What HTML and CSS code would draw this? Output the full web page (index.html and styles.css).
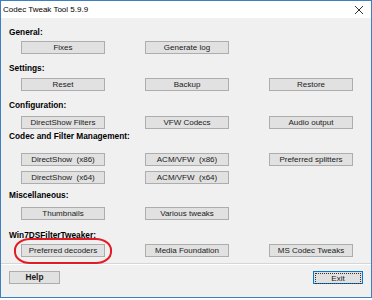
FILE: index.html
```html
<!DOCTYPE html>
<html lang="en">

<head>
    <meta charset="UTF-8">
    <meta name="viewport" content="width=device-width, initial-scale=1.0">
    <title>Codec Tweak Tool</title>
    <link rel="stylesheet" href="styles.css">
</head>

<body>
    <div class="window">
        <div class="titlebar">
            <span class="title">Codec Tweak Tool 5.9.9</span>
            <svg class="close" width="10" height="10" viewBox="0 0 10 10">
                <path d="M1 1 L9 9 M9 1 L1 9" stroke="#333" stroke-width="1" fill="none" />
            </svg>
        </div>

        <div class="content">
            <div class="section general">
                <div class="label">General:</div>
                <div class="row">
                    <button class="btn">Fixes</button>
                    <button class="btn">Generate log</button>
                </div>
            </div>

            <div class="section settings">
                <div class="label">Settings:</div>
                <div class="row">
                    <button class="btn">Reset</button>
                    <button class="btn">Backup</button>
                    <button class="btn">Restore</button>
                </div>
            </div>

            <div class="section config">
                <div class="label">Configuration:</div>
                <div class="row">
                    <button class="btn">DirectShow Filters</button>
                    <button class="btn">VFW Codecs</button>
                    <button class="btn">Audio output</button>
                </div>
            </div>

            <div class="section manage">
                <div class="label">Codec and Filter Management:</div>
                <div class="row">
                    <button class="btn">DirectShow&nbsp; (x86)</button>
                    <button class="btn">ACM/VFW&nbsp; (x86)</button>
                    <button class="btn">Preferred splitters</button>
                </div>
                <div class="row second">
                    <button class="btn">DirectShow&nbsp; (x64)</button>
                    <button class="btn">ACM/VFW&nbsp; (x64)</button>
                </div>
            </div>

            <div class="section misc">
                <div class="label">Miscellaneous:</div>
                <div class="row">
                    <button class="btn">Thumbnails</button>
                    <button class="btn">Various tweaks</button>
                </div>
            </div>

            <div class="section win7">
                <div class="label">Win7DSFilterTweaker:</div>
                <div class="row">
                    <div class="marked">
                        <button class="btn">Preferred decoders</button>
                        <div class="circle"></div>
                    </div>
                    <button class="btn">Media Foundation</button>
                    <button class="btn">MS Codec Tweaks</button>
                </div>
            </div>
        </div>

        <div class="footer">
            <button class="btn help">Help</button>
            <button class="btn exit"><span class="focus">Exit</span></button>
        </div>
    </div>
</body>

</html>
```

FILE: styles.css
```css
body {
    margin: 0;
    background: #ffffff;
    font-family: "Liberation Sans", Arial, sans-serif;
}

.window {
    width: 370px;
    height: 296px;
    border: 1px solid #3e7fc1;
    background: #f0f0f0;
    display: flex;
    flex-direction: column;
}

.titlebar {
    height: 17px;
    background: #ffffff;
    display: flex;
    align-items: center;
    justify-content: space-between;
    padding: 0 7px 0 2px;
}

.title {
    font-size: 8px;
    color: #000;
}

.content {
    flex: 1;
}

.label {
    font-size: 8.3px;
    font-weight: bold;
    line-height: 10px;
    padding-left: 8px;
    color: #000;
}

.row {
    display: grid;
    grid-template-columns: repeat(3, 84px);
    column-gap: 40px;
    padding-left: 20px;
}

.btn {
    height: 13px;
    margin: 0;
    padding: 0;
    border: 1px solid #adadad;
    background: #e1e1e1;
    font-family: "Liberation Sans", Arial, sans-serif;
    font-size: 8px;
    color: #1a1a1a;
    line-height: 11px;
    text-align: center;
    white-space: nowrap;
}

/* spacing between the groups, taken from the screenshot */
.general { margin-top: 9px; }
.general .row { margin-top: 4px; }

.settings { margin-top: 9px; }
.settings .row { margin-top: 5px; }

.config { margin-top: 9px; }
.config .row { margin-top: 6px; }

.manage { margin-top: 2px; }
.manage .row { margin-top: 12px; }
.manage .row.second { margin-top: 5px; }

.misc { margin-top: 6px; }
.misc .row { margin-top: 7px; }

.win7 { margin-top: 10px; }
.win7 .row { margin-top: 4px; }

.marked {
    position: relative;
    display: flex;
}

.marked .btn {
    width: 84px;
}

.circle {
    position: absolute;
    left: -7px;
    top: -6px;
    width: 94px;
    height: 22px;
    border: 2px solid #e21b25;
    border-radius: 16px / 12px;
    pointer-events: none;
}

.footer {
    border-top: 1px solid #d6d6d6;
    box-shadow: inset 0 1px 0 #ffffff;
    height: 26px;
    display: flex;
    justify-content: space-between;
    align-items: flex-start;
    padding: 7px 8px 0 8px;
}

.help {
    width: 51px;
    font-weight: bold;
    font-size: 8.3px;
}

.exit {
    width: 50px;
    border-color: #0078d7;
    padding: 1px;
}

.focus {
    display: block;
    height: 9px;
    line-height: 9px;
    border: 1px dotted #333;
}
```
